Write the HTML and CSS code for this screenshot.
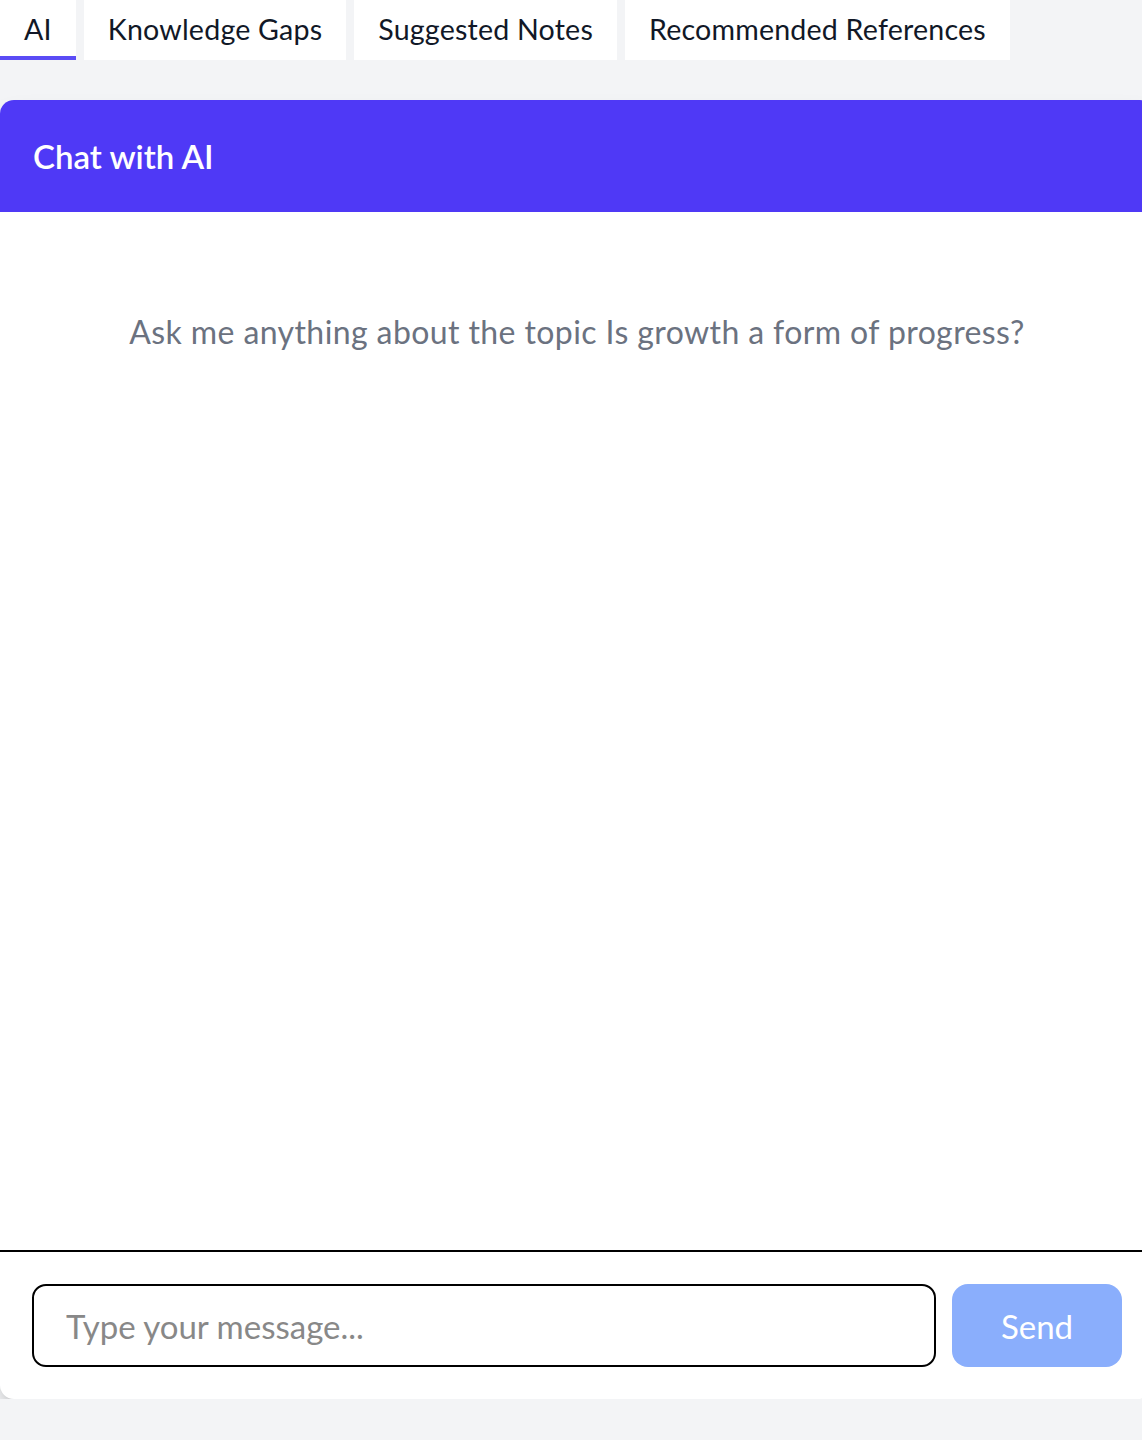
FILE: index.html
```html
<!DOCTYPE html>
<html lang="en">
<head>
    <meta charset="UTF-8">
    <meta name="viewport" content="width=device-width, initial-scale=1.0">
    <title>Chat with AI</title>
    <link rel="stylesheet" href="styles.css">
</head>
<body>

    <!-- Tabs -->
    <div class="tabs">
        <button class="tab active">AI</button>
        <button class="tab">Knowledge Gaps</button>
        <button class="tab">Suggested Notes</button>
        <button class="tab">Recommended References</button>
    </div>

    <div class="chat">
        <div class="chat-header">Chat with AI</div>
        <div class="chat-body">
            <p class="empty">Ask me anything about the topic Is growth a form of progress?</p>
        </div>
        <div class="chat-input">
            <input type="text" placeholder="Type your message...">
            <button class="send">Send</button>
        </div>
    </div>

</body>
</html>
```

FILE: styles.css
```css
body {
    font-family: 'Lato', 'Open Sans', sans-serif;
    background-color: #f3f4f6;
    margin: 0;
    color: #111827;
}

/* Tabs */
.tabs {
    display: flex;
    gap: 8px;
    height: 60px;
}

.tab {
    font-family: inherit;
    font-size: 28.6px;
    letter-spacing: 0.2px;
    color: #111827;
    background-color: #fff;
    border: none;
    border-bottom: 4px solid transparent;
    padding: 2px 24px 0;
    cursor: pointer;
}

.tab.active {
    border-bottom-color: #5b4cf5;
}

.chat {
    width: 1154px;
    margin-top: 40px;
    background-color: #fff;
    border-radius: 14px;
    box-shadow: 0 14px 24px -4px rgba(0, 0, 0, 0.18), 0 4px 8px -4px rgba(0, 0, 0, 0.12);
    overflow: hidden;
}

.chat-header {
    background-color: #4f39f6;
    color: #fff;
    font-size: 33px;
    font-weight: 600;
    height: 112px;
    padding: 0 33px;
    display: flex;
    align-items: center;
    box-sizing: border-box;
}

.chat-body {
    height: 1038px;
    padding: 100px 32px;
    box-sizing: border-box;
}

.empty {
    margin: 0;
    text-align: center;
    font-size: 32px;
    letter-spacing: 0.4px;
    color: #6b7280;
}

.chat-input {
    display: flex;
    gap: 16px;
    padding: 32px;
    border-top: 2px solid #000;
}

.chat-input input {
    flex: 1;
    height: 83px;
    box-sizing: border-box;
    border: 2px solid #000;
    border-radius: 14px;
    padding: 0 32px;
    font-family: inherit;
    font-size: 33px;
    outline: none;
}

.chat-input input::placeholder {
    color: #888;
}

.send {
    width: 170px;
    height: 83px;
    border: none;
    border-radius: 16px;
    background-color: #8aaefc;
    color: #fff;
    font-family: inherit;
    font-size: 33px;
    cursor: pointer;
}
```
